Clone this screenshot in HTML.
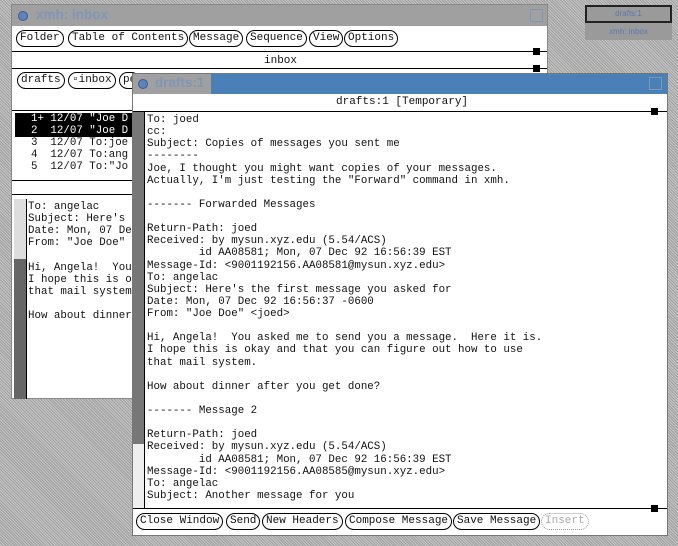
<!DOCTYPE html>
<html><head><style>
*{margin:0;padding:0;box-sizing:border-box}
body{width:678px;height:546px;overflow:hidden;position:relative;background:#b4b4b4;background-image:repeating-linear-gradient(45deg,#a0a0a0 0 1px,#c4c4c4 1px 2px);font-family:"Liberation Mono",monospace;font-size:10.8px;color:#111}
.a{position:absolute}
.win{position:absolute;background:#fff;border:1px solid #888}
.btn{position:absolute;border:1px solid #000;border-radius:9px;height:17px;line-height:15px;padding:0 3px;background:#fff;white-space:nowrap;font-size:11px}
.ln{position:absolute;height:1px;background:#000}
.sq{position:absolute;width:7px;height:7px;background:#000}
pre{font-family:"Liberation Mono",monospace;font-size:10.8px;line-height:12.13px;position:absolute}
.title{position:absolute;font-family:"Liberation Sans",sans-serif;font-weight:bold;font-size:13.5px;color:#7f96b8}
</style></head><body>
<div class="a" style="left:585px;top:5px;width:87px;height:18px;background:#9a9a9a;border:2px solid #222;font-size:8px;color:#5c78b0;text-align:center;line-height:14px;font-family:'Liberation Sans',sans-serif">drafts:1</div>
<div class="a" style="left:585px;top:23px;width:87px;height:17px;background:#9a9a9a;font-size:8px;color:#5c78b0;text-align:center;line-height:17px;font-family:'Liberation Sans',sans-serif">xmh: inbox</div>

<div class="win" style="left:11px;top:4px;width:537px;height:395px">
 <div class="a" style="left:0;top:0;width:535px;height:21px;background:#a0a0a0"></div>
 <div class="a" style="left:6px;top:6px;width:10px;height:10px;border-radius:50%;background:#5c82c0;border:1px solid #3a5a90"></div>
 <div class="title" style="left:24px;top:2px">xmh: inbox</div>
 <div class="a" style="left:518px;top:4px;width:13px;height:13px;border:1px solid #7f96b8"></div>
 <div class="btn" style="left:4px;top:25px">Folder</div>
 <div class="btn" style="left:56px;top:25px">Table of Contents</div>
 <div class="btn" style="left:177px;top:25px">Message</div>
 <div class="btn" style="left:234px;top:25px">Sequence</div>
 <div class="btn" style="left:297px;top:25px">View</div>
 <div class="btn" style="left:332px;top:25px">Options</div>
 <div class="ln" style="left:0;top:46px;width:535px"></div><div class="sq" style="left:521px;top:43px"></div>
 <div class="a" style="left:252px;top:50px;font-size:11px">inbox</div>
 <div class="ln" style="left:0;top:63px;width:535px"></div><div class="sq" style="left:521px;top:60px"></div>
 <div class="btn" style="left:5px;top:67px">drafts</div>
 <div class="btn" style="left:56px;top:67px">▫inbox</div>
 <div class="btn" style="left:107px;top:67px">pe</div>
 <div class="ln" style="left:0;top:105px;width:535px"></div>
 <div class="a" style="left:3px;top:108px;width:118px;height:24px;background:#000"></div>
 <pre style="left:6px;top:108px;color:#fff">  1+ 12/07 "Joe D
  2  12/07 "Joe D</pre>
 <pre style="left:6px;top:132px">  3  12/07 To:joe
  4  12/07 To:ang
  5  12/07 To:"Jo</pre>
 <div class="ln" style="left:0;top:175px;width:535px"></div>
 <div class="ln" style="left:0;top:189px;width:535px"></div>
 <div class="a" style="left:2px;top:194px;width:12px;height:200px;background:#ddd"></div>
 <div class="a" style="left:2px;top:254px;width:12px;height:140px;background:#666"></div>
 <div class="a" style="left:14px;top:194px;width:1px;height:200px;background:#000"></div>
 <pre style="left:16px;top:196px">To: angelac
Subject: Here's
Date: Mon, 07 De
From: "Joe Doe"

Hi, Angela!  You
I hope this is o
that mail system

How about dinner</pre>
</div>

<div class="win" style="left:132px;top:73px;width:536px;height:463px;border-color:#777">
 <div class="a" style="left:0;top:0;width:534px;height:20px;background:#4a80b8"></div>
 <div class="a" style="left:0;top:0;width:78px;height:20px;background:#a0a0a0"></div>
 <div class="a" style="left:5px;top:5px;width:10px;height:10px;border-radius:50%;background:#5c82c0;border:1px solid #3a5a90"></div>
 <div class="title" style="left:22px;top:1px">drafts:1</div>
 <div class="a" style="left:516px;top:3px;width:13px;height:13px;border:1px solid #7f96b8"></div>
 <div class="a" style="left:203px;top:22px;font-size:11px">drafts:1 [Temporary]</div>
 <div class="ln" style="left:0;top:37px;width:534px"></div><div class="sq" style="left:518px;top:34px"></div>
 <div class="a" style="left:0;top:38px;width:11px;height:332px;background:#777"></div>
 <div class="a" style="left:0;top:370px;width:11px;height:64px;background:#eee"></div>
 <div class="a" style="left:11px;top:38px;width:1px;height:396px;background:#000"></div>
 <pre style="left:14px;top:40px">To: joed
cc:
Subject: Copies of messages you sent me
--------
Joe, I thought you might want copies of your messages.
Actually, I'm just testing the "Forward" command in xmh.

------- Forwarded Messages

Return-Path: joed
Received: by mysun.xyz.edu (5.54/ACS)
        id AA08581; Mon, 07 Dec 92 16:56:39 EST
Message-Id: &lt;9001192156.AA08581@mysun.xyz.edu&gt;
To: angelac
Subject: Here's the first message you asked for
Date: Mon, 07 Dec 92 16:56:37 -0600
From: "Joe Doe" &lt;joed&gt;

Hi, Angela!  You asked me to send you a message.  Here it is.
I hope this is okay and that you can figure out how to use
that mail system.

How about dinner after you get done?

------- Message 2

Return-Path: joed
Received: by mysun.xyz.edu (5.54/ACS)
        id AA08581; Mon, 07 Dec 92 16:56:39 EST
Message-Id: &lt;9001192156.AA08585@mysun.xyz.edu&gt;
To: angelac
Subject: Another message for you</pre>
 <div class="ln" style="left:0;top:434px;width:534px"></div><div class="sq" style="left:518px;top:431px"></div>
 <div class="btn" style="left:3px;top:439px">Close Window</div>
 <div class="btn" style="left:93px;top:439px">Send</div>
 <div class="btn" style="left:129px;top:439px">New Headers</div>
 <div class="btn" style="left:212px;top:439px">Compose Message</div>
 <div class="btn" style="left:320px;top:439px">Save Message</div>
 <div class="btn" style="left:408px;top:439px;border:1px dotted #999;color:#aaa">Insert</div>
</div>
</body></html>
